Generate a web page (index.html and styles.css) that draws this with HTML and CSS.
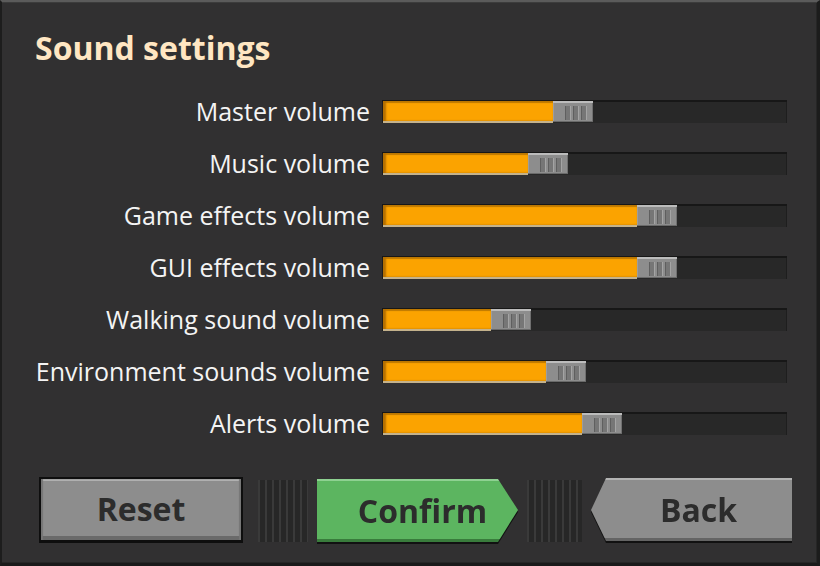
FILE: index.html
```html
<!DOCTYPE html>
<html>
<head>
<meta charset="utf-8">
<link rel="stylesheet" href="styles.css">
</head>
<body>
<div class="window">
  <h1 class="title">Sound settings</h1>
  <div class="rows">
    <div class="label">Master volume</div>
    <div class="track"><div class="fill" style="width:170px"></div><div class="thumb"><span></span><span></span><span></span></div></div>
    <div class="label">Music volume</div>
    <div class="track"><div class="fill" style="width:145px"></div><div class="thumb"><span></span><span></span><span></span></div></div>
    <div class="label">Game effects volume</div>
    <div class="track"><div class="fill" style="width:254px"></div><div class="thumb"><span></span><span></span><span></span></div></div>
    <div class="label">GUI effects volume</div>
    <div class="track"><div class="fill" style="width:254px"></div><div class="thumb"><span></span><span></span><span></span></div></div>
    <div class="label">Walking sound volume</div>
    <div class="track"><div class="fill" style="width:108px"></div><div class="thumb"><span></span><span></span><span></span></div></div>
    <div class="label">Environment sounds volume</div>
    <div class="track"><div class="fill" style="width:163px"></div><div class="thumb"><span></span><span></span><span></span></div></div>
    <div class="label">Alerts volume</div>
    <div class="track"><div class="fill" style="width:199px"></div><div class="thumb"><span></span><span></span><span></span></div></div>
  </div>
  <div class="buttons">
    <div class="btn-wrap reset-wrap"><div class="btn reset">Reset</div></div>
    <div class="grip grip1"></div>
    <div class="btn-wrap"><div class="btn confirm">Confirm</div></div>
    <div class="grip grip2"></div>
    <div class="btn-wrap"><div class="btn back">Back</div></div>
  </div>
</div>
</body>
</html>
```

FILE: styles.css
```css
* { box-sizing: border-box; }
html, body { margin: 0; padding: 0; background: #1b1b1b; }
.window {
  width: 820px;
  height: 566px;
  background: #313031;
  border-top: 2px solid #5b5b5b;
  border-left: 2px solid #1d1d1d;
  border-right: 3px solid #1c1c1c;
  border-bottom: 3px solid #1a1a1a;
  box-shadow: inset 0 1px 0 #3c3c3c, inset -1px 0 0 #262626, inset 0 -1px 0 #262626;
  padding: 0 0 0 33px;
  font-family: "Open Sans", "DejaVu Sans", sans-serif;
}
.title {
  margin: 26px 0 0 0;
  font-size: 32px;
  line-height: 40px;
  font-weight: 700;
  color: #ffe6c2;
}
.rows {
  margin-top: 32px;
  display: grid;
  grid-template-columns: 335px 405px;
  column-gap: 12px;
  row-gap: 29px;
  align-items: center;
}
.label {
  font-size: 25px;
  line-height: 23px;
  color: #f4f4f4;
  text-align: right;
  white-space: nowrap;
}
.track {
  height: 23px;
  background: #282828;
  box-shadow: inset 0 2px 0 #171717, inset 2px 0 0 #1c1c1c, inset -1px 0 0 #1e1e1e;
  display: flex;
  padding: 1px 1px 0 1px;
}
.fill {
  height: 100%;
  background: #fba300;
  border-bottom: 2px solid #c4b28c;
  box-shadow: inset 3px 0 2px #b46f00, inset 0 2px 1px #c07a00;
}
.thumb {
  width: 40px;
  height: 21px;
  background: #8d8d8d;
  border-top: 2px solid #bcbcbc;
  border-bottom: 1px solid #6a6a6a;
  box-shadow: inset 1px 0 0 #9d9d9d, inset -1px 0 0 #707070;
  display: flex;
  justify-content: center;
  gap: 2px;
  padding: 3px 0 0 6px;
}
.thumb span {
  width: 6px;
  height: 14px;
  background: #767676;
  box-shadow: inset 1px 0 0 #5f5f5f, inset -1px 0 0 #a4a4a4;
}
.buttons {
  margin-top: 42px;
  margin-left: 4px;
  display: flex;
  align-items: flex-start;
}
.btn-wrap {
  filter: drop-shadow(0 2px 0 #111);
}
.btn {
  height: 63px;
  width: 201px;
  display: flex;
  align-items: center;
  justify-content: center;
  font-size: 32px;
  font-weight: 700;
  color: #2c2c2c;
  line-height: 1;
}
.reset-wrap { filter: none; }
.reset {
  width: 204px;
  height: 66px;
  background: linear-gradient(#b0b0b0 0 2px, #8d8d8d 2px, #8d8d8d calc(100% - 4px), #6a6a6a calc(100% - 4px));
  border: 2px solid #0e0e0e;
  border-bottom-width: 3px;
  box-shadow: inset 2px 0 1px #767676, inset -2px 0 1px #767676;
  padding-bottom: 2px;
}
.grip {
  height: 62px;
  margin-top: 3px;
  background: repeating-linear-gradient(90deg, #3a3a3a 0 2px, #272727 2px 7px);
}
.grip1 { width: 50px; margin-left: 15px; margin-right: 9px; }
.grip2 { width: 55px; margin-left: 9px; margin-right: 9px; }
.confirm {
  margin-top: 2px;
  background: linear-gradient(#8ed191 0 2px, #5cb560 2px, #5cb560 calc(100% - 3px), #397c3c calc(100% - 3px));
  clip-path: polygon(0 0, 181px 0, 201px 31px, 181px 63px, 0 63px);
  padding-left: 10px;
}
.back {
  margin-top: 1px;
  background: linear-gradient(#b3b3b3 0 2px, #8d8d8d 2px, #8d8d8d calc(100% - 3px), #646464 calc(100% - 3px));
  clip-path: polygon(15px 0, 201px 0, 201px 63px, 15px 63px, 0 32px);
  padding-left: 14px;
}
```
